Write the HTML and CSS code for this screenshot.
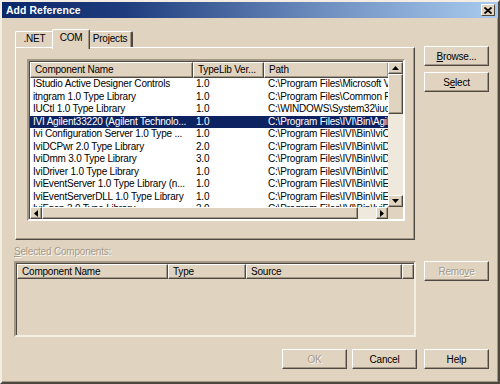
FILE: index.html
```html
<!DOCTYPE html>
<html>
<head>
	<title>Add Reference</title>
	<link rel="stylesheet" href="styles.css">
</head>
<body>
	<div class="window">
		<div class="titlebar">
			<span class="title">Add Reference</span>
			<span class="close">
				<svg width="8" height="7" viewBox="0 0 8 7"><path d="M0.5 0.5 L7.5 6.5 M7.5 0.5 L0.5 6.5" stroke="#000" stroke-width="1.8"/></svg>
			</span>
		</div>

		<div class="dialog">
			<div class="tabbox">
				<div class="tabs">
					<div class="tab tab-net">.NET</div>
					<div class="tab tab-com active">COM</div>
					<div class="tab tab-projects">Projects</div>
				</div>
				<div class="panel">
					<div class="listview">
						<div class="lv-body">
							<div class="lv-row lv-head">
								<div class="hcell">Component Name</div>
								<div class="hcell">TypeLib Ver...</div>
								<div class="hcell">Path</div>
							</div>
							<div class="lv-row"><span>IStudio Active Designer Controls</span><span>1.0</span><span>C:\Program Files\Microsoft Visual Studio\Common</span></div>
							<div class="lv-row"><span>itngram 1.0 Type Library</span><span>1.0</span><span>C:\Program Files\Common Files\System</span></div>
							<div class="lv-row"><span>IUCtl 1.0 Type Library</span><span>1.0</span><span>C:\WINDOWS\System32\iuctl.dll</span></div>
							<div class="lv-row selected"><span>IVI Agilent33220 (Agilent Technolo...</span><span>1.0</span><span>C:\Program Files\IVI\Bin\Agilent33220.dll</span></div>
							<div class="lv-row"><span>Ivi Configuration Server 1.0 Type ...</span><span>1.0</span><span>C:\Program Files\IVI\Bin\IviConfigServer.dll</span></div>
							<div class="lv-row"><span>IviDCPwr 2.0 Type Library</span><span>2.0</span><span>C:\Program Files\IVI\Bin\IviDCPwrTypeLib.dll</span></div>
							<div class="lv-row"><span>IviDmm 3.0 Type Library</span><span>3.0</span><span>C:\Program Files\IVI\Bin\IviDmmTypeLib.dll</span></div>
							<div class="lv-row"><span>IviDriver 1.0 Type Library</span><span>1.0</span><span>C:\Program Files\IVI\Bin\IviDriverTypeLib.dll</span></div>
							<div class="lv-row"><span>IviEventServer 1.0 Type Library (n...</span><span>1.0</span><span>C:\Program Files\IVI\Bin\IviEventServer.dll</span></div>
							<div class="lv-row"><span>IviEventServerDLL 1.0 Type Library</span><span>1.0</span><span>C:\Program Files\IVI\Bin\IviEventServerDLL.dll</span></div>
							<div class="lv-row"><span>IviFgen 3.0 Type Library</span><span>3.0</span><span>C:\Program Files\IVI\Bin\IviFgenTypeLib.dll</span></div>
						</div>
						<div class="vscroll">
							<div class="sbtn"><svg width="7" height="4"><polygon points="0,4 3.5,0 7,4" fill="#000"/></svg></div>
							<div class="thumb"></div>
							<div class="track"></div>
							<div class="sbtn"><svg width="7" height="4"><polygon points="0,0 3.5,4 7,0" fill="#000"/></svg></div>
						</div>
						<div class="hscroll">
							<div class="sbtn"><svg width="4" height="7"><polygon points="4,0 0,3.5 4,7" fill="#000"/></svg></div>
							<div class="thumb"></div>
							<div class="track"></div>
							<div class="sbtn"><svg width="4" height="7"><polygon points="0,0 4,3.5 0,7" fill="#000"/></svg></div>
						</div>
						<div class="corner"></div>
					</div>
				</div>
			</div>

			<div class="side side-top">
				<button class="btn"><u>B</u>rowse...</button>
				<button class="btn">S<u>e</u>lect</button>
			</div>

			<div class="label disabled"><u>S</u>elected Components:</div>

			<div class="selected-list">
				<div class="sel-head">
					<div class="hcell">Component Name</div>
					<div class="hcell">Type</div>
					<div class="hcell">Source</div>
					<div class="hcell"></div>
				</div>
			</div>

			<div class="side side-bottom">
				<button class="btn disabled">Remo<u>v</u>e</button>
			</div>

			<div class="footer">
				<button class="btn disabled">OK</button>
				<button class="btn">Cancel</button>
				<button class="btn help">Help</button>
			</div>
		</div>
	</div>
</body>
</html>
```

FILE: styles.css
```css
* {
	margin: 0;
	padding: 0;
	box-sizing: border-box;
}

body {
	font-family: "Liberation Sans", Arial, sans-serif;
	font-size: 10px;
	letter-spacing: -0.2px;
	color: #000;
	background: #e0d3c0;
}

.window {
	width: 500px;
	height: 384px;
	background: #e0d3c0;
	border: 2px solid;
	border-color: #f3ede3 #4e4841 #4e4841 #f3ede3;
	box-shadow: inset -1px -1px #a39785;
}

.titlebar {
	height: 16px;
	display: flex;
	align-items: center;
	justify-content: space-between;
	padding: 0 3px 0 4px;
	background: linear-gradient(to right, #0c2769 0%, #1f3d7e 25%, #6f8fc0 65%, #a9cbee 100%);
}

.title {
	color: #fff;
	font-weight: bold;
	font-size: 10.4px;
	letter-spacing: 0.1px;
}

.close {
	width: 14px;
	height: 12px;
	display: flex;
	align-items: center;
	justify-content: center;
	background: #e0d3c0;
	border: 1px solid;
	border-color: #fff #4e4841 #4e4841 #fff;
}

.dialog {
	display: grid;
	grid-template-columns: 402px 65px;
	column-gap: 8px;
	padding: 11px 0 0 12px;
}

/* tabs */

.tabbox {
	padding-left: 1px;
}

.tabs {
	display: flex;
	align-items: flex-end;
	height: 18px;
}

.tab {
	height: 16px;
	line-height: 14px;
	text-align: center;
	border: 1px solid;
	border-bottom: none;
	border-color: #fff #4e4841 #4e4841 #fff;
	box-shadow: inset -1px 0 #a39785;
	border-radius: 2px 2px 0 0;
	background: #e0d3c0;
}

.tab-net {
	width: 39px;
}

.tab-com {
	width: 34px;
}

.tab-projects {
	width: 45px;
	border-right-width: 2px;
}

.tab.active {
	position: relative;
	z-index: 1;
	width: 38px;
	height: 20px;
	line-height: 16px;
	margin: 0 -2px -2px;
}

.panel {
	width: 400px;
	height: 193px;
	padding: 11px 0 0 11px;
	border: 1px solid;
	border-color: #fff #4e4841 #4e4841 #fff;
	box-shadow: inset -1px -1px #a39785;
}

/* component list */

.listview {
	width: 378px;
	height: 162px;
	display: grid;
	grid-template-columns: 359px 15px;
	grid-template-rows: 146px 12px;
	border: 2px solid;
	border-color: #a39785 #fff #fff #a39785;
	box-shadow: inset 1px 1px #4e4841;
	background: #fff;
}

.lv-body {
	height: 146px;
	min-height: 0;
	overflow: hidden;
	padding-top: 1px;
	padding-left: 1px;
}

.lv-row {
	display: grid;
	grid-template-columns: 163px 71px 125px;
	height: 12.5px;
	line-height: 12.5px;
	white-space: nowrap;
}

.lv-row span {
	overflow: hidden;
	padding-left: 3px;
}

.lv-row span:last-child {
	padding-left: 4px;
}

.lv-row.selected {
	background: #0d2361;
	color: #fff;
}

.lv-head {
	height: 16px;
	line-height: 14px;
}

.hcell {
	background: #e0d3c0;
	padding-left: 4px;
	white-space: nowrap;
	overflow: hidden;
	border: 1px solid;
	border-color: #fff #4e4841 #4e4841 #fff;
	box-shadow: inset -1px -1px #a39785;
}

.vscroll {
	display: grid;
	grid-template-rows: 12px 40px 1fr 12px;
	background: #efe8dd;
	margin-top: 1px;
	min-height: 0;
}

.hscroll {
	display: grid;
	grid-template-columns: 12px 316px 1fr 12px;
	background: #efe8dd;
	margin-left: 1px;
	min-height: 0;
}

.sbtn,
.thumb {
	background: #e0d3c0;
	border: 1px solid;
	border-color: #fff #4e4841 #4e4841 #fff;
	box-shadow: inset -1px -1px #a39785;
	display: flex;
	align-items: center;
	justify-content: center;
}

.corner {
	background: #e0d3c0;
}

/* right column buttons */

.side {
	display: flex;
	flex-direction: column;
	gap: 6px;
}

.side-top {
	padding-top: 17px;
}

.side-bottom {
	padding-top: 3px;
}

.btn {
	width: 65px;
	height: 20px;
	font-family: "Liberation Sans", Arial, sans-serif;
	font-size: 10px;
	letter-spacing: -0.2px;
	color: #000;
	background: #e0d3c0;
	border: 1px solid;
	border-color: #fff #4e4841 #4e4841 #fff;
	box-shadow: inset -1px -1px #a39785;
}

.disabled {
	color: #a59a8a;
	text-shadow: 1px 1px #fbf8f2;
}

.label {
	grid-column: 1;
	margin-top: 6px;
	height: 12px;
	line-height: 12px;
}

.selected-list {
	grid-column: 1;
	margin-top: 3px;
	height: 76px;
	border: 2px solid;
	border-color: #a39785 #f3ede3 #f3ede3 #a39785;
	box-shadow: inset 1px 1px #4e4841;
	padding: 1px 0 0 1px;
}

.sel-head {
	display: grid;
	grid-template-columns: 151px 78px 156px 1fr;
	height: 15px;
	line-height: 13px;
}

.footer {
	grid-column: 1 / -1;
	display: flex;
	justify-content: flex-end;
	gap: 5px;
	margin-top: 12px;
}

.footer .help {
	margin-left: 2px;
}
```
